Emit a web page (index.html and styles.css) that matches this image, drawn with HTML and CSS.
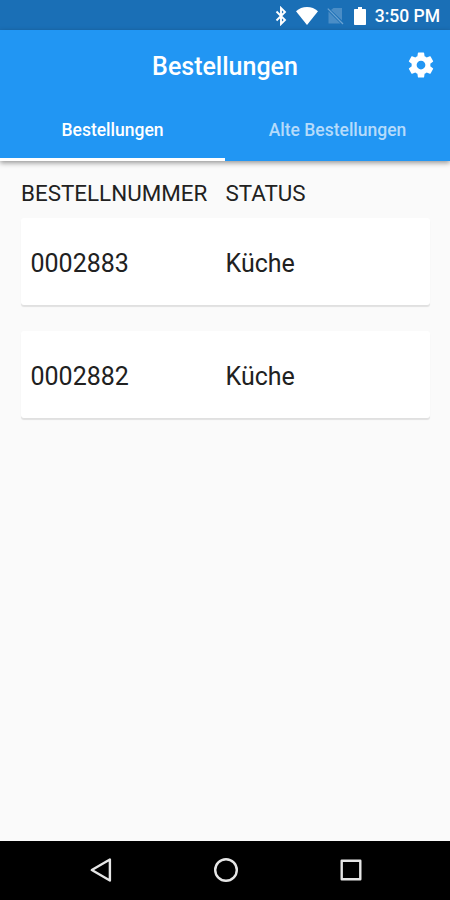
FILE: index.html
```html
<!DOCTYPE html>
<html lang="de">
<head>
  <meta charset="UTF-8">
  <meta name="viewport" content="width=device-width, initial-scale=1.0">
  <title>Bestellungen</title>
  <link rel="stylesheet" href="styles.css">
</head>
<body>
  <!-- Statusleiste -->
  <div class="status-bar">
    <svg class="icon-bluetooth" width="12" height="20" viewBox="0 0 12 20">
      <path d="M1.500 5.500L10 14L6 18V2L10 6L1.500 14.500" fill="none" stroke="#fff" stroke-width="1.900"/>
    </svg>
    <svg class="icon-wifi" width="22" height="18" viewBox="0 0 22 18">
      <path d="M11 18L0 4.200C3 1.600 6.800 0 11 0s8 1.600 11 4.200z" fill="#fff"/>
    </svg>
    <svg class="icon-sim" width="17" height="18" viewBox="0 0 17 18">
      <path d="M6.500 1H15v12.600L4 2.900zM1.500 4.500L13.500 16.500H1.500z" fill="#4a8dc6"/>
      <path d="M.8 1.600L16 17" fill="none" stroke="#6ba3d2" stroke-width="1.300"/>
    </svg>
    <svg class="icon-battery" width="12" height="18" viewBox="0 0 12 18">
      <path d="M4 0h4v2h3.200q.8 0 .8.8v14.400q0 .8-.8.8H.8q-.8 0-.8-.8V2.800q0-.8.8-.8H4z" fill="#fff"/>
    </svg>
    <span class="clock">3:50 PM</span>
  </div>

  <header class="header">
    <div class="app-bar">
      <h1>Bestellungen</h1>
      <button class="settings" aria-label="Einstellungen">
        <svg width="30" height="30" viewBox="0 0 24 24">
          <path fill="#fff" d="M19.430 12.980c.04-.32.07-.64.07-.98s-.03-.66-.07-.98l2.110-1.650c.19-.15.24-.42.12-.64l-2-3.460c-.12-.22-.39-.3-.61-.22l-2.490 1c-.52-.4-1.080-.73-1.690-.98l-.38-2.650C14.460 2.180 14.250 2 14 2h-4c-.25 0-.46.18-.49.42l-.38 2.650c-.61.25-1.170.59-1.690.98l-2.490-1c-.23-.09-.49 0-.61.22l-2 3.460c-.13.22-.07.49.12.64l2.110 1.650c-.04.32-.07.65-.07.98s.03.66.07.98l-2.110 1.650c-.19.15-.24.42-.12.64l2 3.460c.12.22.39.3.61.22l2.490-1c.52.4 1.080.73 1.690.98l.38 2.650c.03.24.24.42.49.42h4c.25 0 .46-.18.49-.42l.38-2.650c.61-.25 1.170-.59 1.690-.98l2.490 1c.23.09.49 0 .61-.22l2-3.460c.12-.22.07-.49-.12-.64l-2.110-1.650zM12 15.500c-1.930 0-3.500-1.570-3.500-3.500s1.570-3.500 3.500-3.500 3.500 1.570 3.500 3.500-1.570 3.500-3.500 3.500z"/>
        </svg>
      </button>
    </div>
    <nav class="tabs">
      <a class="tab active">Bestellungen</a>
      <a class="tab">Alte Bestellungen</a>
    </nav>
  </header>

  <main class="orders">
    <div class="row labels">
      <span>BESTELLNUMMER</span>
      <span>STATUS</span>
    </div>
    <div class="row card">
      <span>0002883</span>
      <span>Küche</span>
    </div>
    <div class="row card">
      <span>0002882</span>
      <span>Küche</span>
    </div>
  </main>

  <!-- Android-Navigation -->
  <footer class="nav-bar">
    <svg width="26" height="26" viewBox="0 0 26 26">
      <path d="M21.900 2.500v21L3.800 13z"/>
    </svg>
    <svg width="26" height="26" viewBox="0 0 26 26">
      <circle cx="13" cy="13" r="10.800"/>
    </svg>
    <svg width="26" height="26" viewBox="0 0 26 26">
      <rect x="3.700" y="3.700" width="18.600" height="18.600"/>
    </svg>
  </footer>
</body>
</html>
```

FILE: styles.css
```css
* {
  box-sizing: border-box;
}

body {
  margin: 0;
  height: 900px;
  display: flex;
  flex-direction: column;
  background: #fafafa;
  color: #212121;
  font-family: Roboto, sans-serif;
  overflow: hidden;
}

/* Statusleiste */
.status-bar {
  height: 30px;
  display: flex;
  align-items: center;
  justify-content: flex-end;
  padding: 2px 10px 0 0;
  background: #1a6fb6;
  color: #fff;
}

.icon-bluetooth {
  margin-right: 9px;
}

.icon-wifi {
  margin-right: 9px;
}

.icon-sim {
  margin-right: 10px;
}

.icon-battery {
  margin-right: 9px;
}

.clock {
  font-size: 17.5px;
  font-weight: 500;
  line-height: 20px;
}

/* Kopfbereich */
.header {
  height: 130.5px;
  background: #2196f3;
  color: #fff;
  box-shadow: 0 2px 5px rgba(0, 0, 0, 0.4);
}

.app-bar {
  height: 70px;
  display: grid;
  grid-template-columns: 60px 1fr 60px;
  align-items: center;
}

h1 {
  grid-column: 2;
  margin: 0;
  padding-top: 2px;
  font-size: 25px;
  font-weight: 500;
  text-align: center;
}

.settings {
  height: 30px;
  padding: 0 0 0 1px;
  border: none;
  background: none;
  cursor: pointer;
}

.tabs {
  height: 60.5px;
  display: flex;
}

.tab {
  flex: 1;
  padding-top: 3px;
  border-bottom: 3px solid transparent;
  color: #b5dbfb;
  font-size: 17.5px;
  font-weight: 500;
  line-height: 55px;
  text-align: center;
}

.tab.active {
  border-bottom-color: #fff;
  color: #fff;
}

/* Liste der Bestellungen */
.orders {
  flex: 1;
  padding: 16.5px 20px 0 21px;
}

.row {
  display: grid;
  grid-template-columns: 204.5px 1fr;
  align-items: center;
}

.labels {
  height: 32px;
  margin-bottom: 9px;
  font-size: 22.4px;
}

.card {
  height: 87px;
  margin-bottom: 26px;
  padding: 3px 0 0 9.5px;
  grid-template-columns: 195px 1fr;
  border-radius: 3px;
  background: #fff;
  box-shadow: 0 2px 1px rgba(0, 0, 0, 0.1);
  font-size: 25px;
}

/* Android-Navigation */
.nav-bar {
  height: 59.5px;
  display: flex;
  align-items: center;
  justify-content: space-between;
  padding: 0 86.5px 0 87.5px;
  background: #000;
}

.nav-bar svg {
  fill: none;
  stroke: #e6e6e6;
  stroke-width: 2.4;
  stroke-linejoin: round;
}
```
